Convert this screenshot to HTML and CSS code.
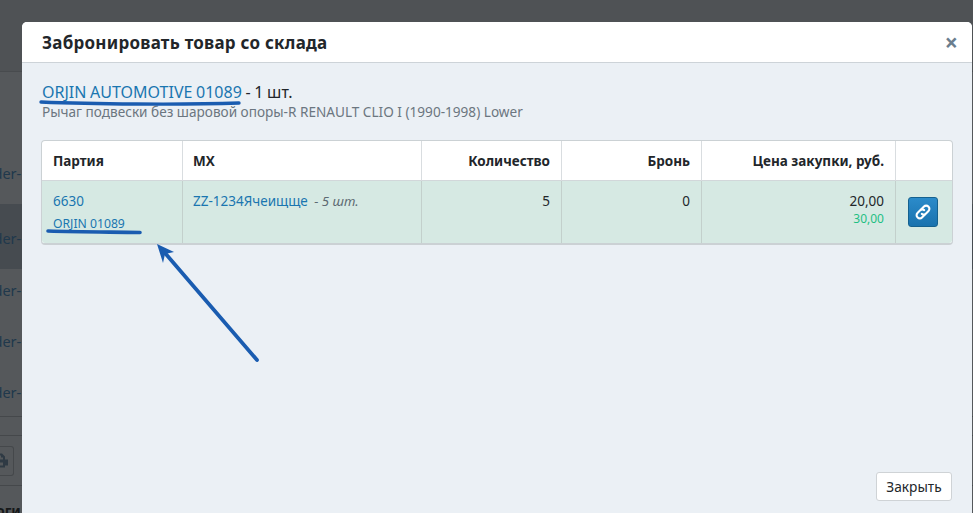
FILE: index.html
```
<!DOCTYPE html>
<html lang="ru">
<head>
<meta charset="utf-8">
<title>Забронировать товар со склада</title>
<link rel="stylesheet" href="styles.css">
</head>
<body>
<div class="page">
  <div class="bg-top"></div>
  <div class="bg-row bg-row-a"><span>order-</span></div>
  <div class="bg-row bg-row-active"><span>order-</span></div>
  <div class="bg-row"><span>order-</span></div>
  <div class="bg-row"><span>order-</span></div>
  <div class="bg-row bg-row-last"><span>order-</span></div>
  <div class="bg-gap"></div>
  <div class="bg-tools">
    <span class="bg-btn">
      <svg width="16" height="15" viewBox="0 0 16 14"><path fill="#2f3a44" d="M4 0h6l3 3v3h3v6h-3v2H4v-2H0V6h4zM6 2v4h5V4H9V2zM6 9v3h5V9z" fill-rule="evenodd"/></svg>
    </span>
  </div>
  <div class="bg-foot">Итоги</div>
</div>
<section class="modal">
  <header class="modal-head">
    <h1>Забронировать товар со склада</h1>
    <span class="close">×</span>
  </header>
  <div class="modal-body">
    <div class="item-title"><a href="#">ORJIN AUTOMOTIVE 01089</a> - 1 шт.</div>
    <div class="item-sub">Рычаг подвески без шаровой опоры-R RENAULT CLIO I (1990-1998) Lower</div>
    <table class="stock">
      <colgroup>
        <col class="c1"><col class="c2"><col class="c3"><col class="c4"><col class="c5"><col class="c6">
      </colgroup>
      <thead>
        <tr>
          <th>Партия</th>
          <th class="mx">МХ</th>
          <th class="num">Количество</th>
          <th class="num">Бронь</th>
          <th class="num">Цена закупки, руб.</th>
          <th></th>
        </tr>
      </thead>
      <tbody>
        <tr>
          <td>
            <a href="#">6630</a>
            <a href="#" class="small">ORJIN 01089</a>
          </td>
          <td class="mx"><a href="#">ZZ-1234Ячеищще</a> <em>- 5 шт.</em></td>
          <td class="num">5</td>
          <td class="num">0</td>
          <td class="num">20,00<span class="price2">30,00</span></td>
          <td class="act">
            <button class="link-btn" type="button" aria-label="Связать">
              <svg width="18" height="18" viewBox="0 0 18 18" fill="none" stroke="#fff" stroke-width="2.1" stroke-linecap="round"><path d="M7.3 6.2 10 3.5a3 3 0 0 1 4.3 0l.2.2a3 3 0 0 1 0 4.3l-2.7 2.7a3 3 0 0 1-4 .2"/><path d="M10.7 11.8 8 14.5a3 3 0 0 1-4.3 0l-.2-.2a3 3 0 0 1 0-4.3l2.7-2.7a3 3 0 0 1 4-.2"/></svg>
            </button>
          </td>
        </tr>
      </tbody>
    </table>
    <div class="modal-foot"><button class="close-btn" type="button">Закрыть</button></div>
  </div>
</section>
<svg class="marks" width="973" height="513" viewBox="0 0 973 513" fill="none" stroke="#1a5cb0" stroke-linecap="round">
  <path d="M41 102C90 104 180 105 239 103" stroke-width="3.4"/>
  <path d="M48 231C80 232 110 232 140 232.500" stroke-width="3.6"/>
  <path d="M257 360 165 253" stroke-width="3.8"/>
  <path d="M157 244 174 252 165 254 163 263Z" fill="#1a5cb0" stroke="none"/>
</svg>
</body>
</html>
```
FILE: styles.css
```
* { box-sizing: border-box; }
html, body { margin: 0; height: 513px; overflow: hidden; }
body { font-family: "Noto Sans", "Open Sans", sans-serif; font-size: 14px; color: #22262a; background: #55585b; position: relative; }

.page { width: 973px; height: 513px; background: #55585b; color: #243b4d; overflow: hidden; }
.bg-top { height: 72px; background: #4f5255; border-bottom: 1px solid #484b4e; }
.bg-row { height: 51px; display: flex; align-items: flex-start; padding-top: 11px; }
.bg-row span { margin-left: -21px; font-size: 14.5px; line-height: 20px; color: #20384c; }
.bg-row-a { height: 132px; padding-top: 91px; }
.bg-row-active { height: 65px; background: #464b50; padding-top: 24px; }
.bg-row-last { height: 45px; }
.bg-gap { height: 20px; border-top: 1px solid #45484b; border-bottom: 1px solid #45484b; }
.bg-tools { height: 50px; border-bottom: 1px solid #45484b; display: flex; align-items: center; }
.bg-btn { width: 14px; height: 30px; border: 1px solid #45484b; border-left: 0; border-radius: 0 3px 3px 0; display: flex; align-items: center; }
.bg-btn svg { margin-left: -8px; flex: none; }
.bg-foot { font-size: 14px; font-weight: 700; line-height: 20px; color: #16181a; padding-top: 15px; margin-left: -22px; }

.modal { position: absolute; left: 22px; top: 22px; width: 950px; height: 491px; background: #ebf0f5; border-radius: 5px 5px 0 0; display: flex; flex-direction: column; }
.modal-head { height: 41px; flex: none; background: #fff; border-bottom: 1px solid #cdd3d8; border-radius: 5px 5px 0 0; display: flex; align-items: center; justify-content: space-between; padding: 0 14px 0 20px; }
.modal-head h1 { margin: 0; font-size: 17px; font-weight: 700; color: #22262a; letter-spacing: .24px; }
.close { font-size: 23px; font-weight: 700; line-height: 1; color: #6b7e8e; }

.modal-body { flex: 1; padding: 19px 20px 12px 19px; display: flex; flex-direction: column; }
.item-title { font-size: 16px; line-height: 21px; padding-left: 1px; color: #22262a; word-spacing: -.5px; }
a { color: #1a76b0; text-decoration: none; }
.item-sub { font-size: 13.6px; line-height: 18px; padding-left: 1px; color: #6b7680; }

.stock { margin-top: 19px; width: 911px; border-collapse: separate; border-spacing: 0; table-layout: fixed; border: 1px solid #cbd1d4; border-bottom-width: 2px; border-radius: 4px; background: #fff; font-size: 13.5px; }
.c1 { width: 141px; } .c2 { width: 239px; } .c3 { width: 140px; } .c4 { width: 140px; } .c5 { width: 194px; } .c6 { width: 56px; }
.stock th { height: 40px; padding: 0 11px; text-align: left; font-weight: 700; border-right: 1px solid #d9dde0; border-bottom: 1px solid #d2d7da; color: #22262a; }
.stock td { height: 62px; padding: 11px 11px 0; vertical-align: top; background: #d6e9e3; border-right: 1px solid #c3d0cc; line-height: 18px; }
.stock th:last-child, .stock td:last-child { border-right: 0; }
.stock td:first-child { border-bottom-left-radius: 3px; }
.stock td:last-child { border-bottom-right-radius: 3px; }
.stock .num { text-align: right; }
.stock .mx { padding-left: 10px; }
.stock em { color: #5d6a72; font-size: 13.2px; padding-left: 3px; }
.small { display: block; font-size: 12.2px; line-height: 15px; margin-top: 6px; }
.price2 { display: block; font-size: 12px; line-height: 15px; margin-top: 1px; color: #1fbf83; }
.stock td.act { padding: 16px 0 0 12px; }
.link-btn { width: 30px; height: 30px; padding: 0; border: 1px solid #15618f; border-radius: 3px; background: linear-gradient(#2b8bca, #1a72ae); display: flex; align-items: center; justify-content: center; }

.modal-foot { margin-top: auto; display: flex; justify-content: flex-end; }
.close-btn { width: 76px; height: 29px; padding: 0; font: 13.7px "Noto Sans", "Open Sans", sans-serif; color: #22262a; background: #fff; border: 1px solid #cfd3d6; border-radius: 3px; }

.marks { position: absolute; left: 0; top: 0; pointer-events: none; }
```
